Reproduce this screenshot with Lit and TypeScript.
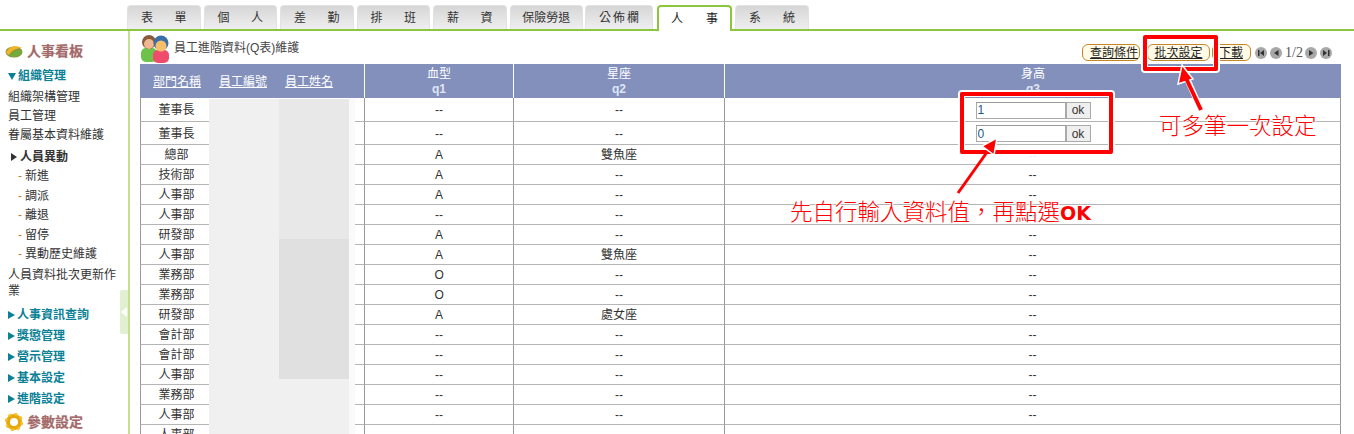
import { LitElement, html, css, svg } from "lit";
import { customElement } from "lit/decorators.js";

const TABS = ["表單", "個人", "差勤", "排班", "薪資", "保險勞退", "公佈欄", "人事", "系統"];
const ROWS: [string, string, string][] = [
  ["董事長", "--", "--"], ["董事長", "--", "--"], ["總部", "A", "雙魚座"], ["技術部", "A", "--"],
  ["人事部", "A", "--"], ["人事部", "--", "--"], ["研發部", "A", "--"], ["人事部", "A", "雙魚座"],
  ["業務部", "O", "--"], ["業務部", "O", "--"], ["研發部", "A", "處女座"], ["會計部", "--", "--"],
  ["會計部", "--", "--"], ["人事部", "--", "--"], ["業務部", "--", "--"], ["人事部", "--", "--"], ["人事部", "--", "--"],
];

const pager = (cx: number, d: string) => svg`
  <circle cx=${cx} cy="7" r="6" fill="#a8a8a8"></circle>
  <path d=${d} fill="#333"></path>`;

@customElement("app-root")
export class AppRoot extends LitElement {
  static styles = css`
    :host { display: block; position: relative; width: 1354px; height: 434px; overflow: hidden; background: #fff;
      font: 12px/16px "Liberation Sans", "Noto Sans CJK TC", sans-serif; color: #333; }
    .tabs { display: flex; height: 31px; box-sizing: border-box; border-bottom: 2px solid #8cc63f; padding: 5px 0 0 127px; gap: 3px; }
    .tab { box-sizing: border-box; width: 73.5px; height: 24px; display: flex; justify-content: space-between; align-items: center; padding: 0 13px;
      background: linear-gradient(#d6d6d6, #efefef); border: 1px solid #e2e2e2; border-bottom: 0; border-radius: 4px 4px 0 0; color: #333; }
    .tab.wide { width: 74px; } .tab.sm { width: 68px; margin-left: -1px; }
    .tab.mid { justify-content: center; padding: 0; }
    .tab.on { height: 26px; width: 75px; margin: 0 0 -2px 1px; background: #fff; border: 2px solid #8cc63f; border-bottom: 0; color: #222; padding: 0 12px; }
    .main { display: flex; height: 403px; }
    .side { box-sizing: border-box; width: 130px; flex: none; border-right: 2px solid #c4e093; padding-top: 10px; overflow: hidden; position: relative; }
    .brand { display: flex; align-items: center; gap: 4px; height: 20px; padding-left: 5px; font-size: 14px; font-weight: bold; color: #a56a6a; text-shadow: 0 0 1px #c9b0b0; }
    .brand + .sec { margin-top: 5px; }
    .sec { display: flex; align-items: center; gap: 1px; height: 21px; padding-left: 8px; color: #0a8196; font-weight: bold; }
    .sec.open { height: 20px; margin-bottom: 1.5px; }
    .tri { width: 0; height: 0; border-top: 4px solid transparent; border-bottom: 4px solid transparent; border-left: 7px solid #0a8196; margin-right: 1px; }
    .tri.down { border: 0; border-left: 4px solid transparent; border-right: 4px solid transparent; border-top: 7px solid #0a8196; margin-right: 1px; }
    .item { height: 19px; line-height: 19px; padding-left: 8px; color: #333; }
    .cur { display: flex; align-items: center; gap: 3px; height: 20px; margin-top: 2.5px; padding-left: 11px; font-weight: bold; color: #333; }
    .tri.dark { border-left: 6px solid #333; margin-right: 0; }
    .sub { height: 19.5px; line-height: 19.5px; padding-left: 18px; display: flex; gap: 3px; }
    .dash { color: #c77a2a; }
    .wrap { width: 112px; padding-left: 8px; margin: 2.5px 0 5px; line-height: 16px; }
    .brand.last { margin-top: 2.5px; }
    .handle { position: absolute; left: 120px; top: 259px; width: 8px; height: 44px; background: #e0f0d0; border-radius: 2px 0 0 2px; display: flex; align-items: center; }
    .handle i { width: 0; height: 0; border-top: 5px solid transparent; border-bottom: 5px solid transparent; border-right: 6px solid #fff; margin-left: 1px; }
    .content { flex: 1; min-width: 0; padding-left: 10px; }
    .head { display: flex; height: 33px; width: 1201px; }
    .title { display: flex; gap: 4px; align-items: center; color: #444; }
    .title svg { margin-top: 1px; }
    .tools { margin-left: auto; display: flex; align-items: center; margin-top: 13px; height: 17px; }
    .btn { box-sizing: border-box; height: 17px; line-height: 17px; text-align: center; border: 1px solid #c8862a; border-radius: 6px; background: #fffbe6; color: #222; text-decoration: underline; }
    .b1 { width: 58px; padding-left: 6px; } .b2 { width: 63px; margin-left: 7px; } .b3 { width: 39px; margin-left: 2px; text-align: right; padding-right: 7px; }
    .pager { display: flex; align-items: center; margin-left: 4px; margin-right: 8px; font: 14px "Liberation Serif", serif; color: #555; }
    .pager span { width: 22px; text-align: center; }
    table { border-collapse: separate; border-spacing: 0; table-layout: fixed; width: 1201px; }
    th { box-sizing: border-box; background: #8290bb; color: #fff; font-weight: normal; height: 34px; padding: 1px 0 0; border-right: 1px solid #fff; line-height: 15px; }
    th:last-child { border-right: 0; }
    th b { color: #dfe6f5; font-size: 12px; display: block; }
    .hcols { display: flex; gap: 18px; padding: 2px 0 0 13px; }
    .hcols u { color: #fff; }
    td { box-sizing: border-box; height: 20px; padding: 1px 0 0; text-align: center; border-bottom: 1px solid #b5b5b5; border-right: 1px solid #999; color: #333; line-height: 14px; white-space: nowrap; }
    td.first { border-left: 1px solid #999; border-right: 0; padding-left: 3px; }
    td.mask { border-right: 0; }
    tr.r0 td { height: 24px; } tr.r1 td { height: 23px; }
    .form { display: flex; justify-content: center; padding-left: 1px; }
    .form input { box-sizing: border-box; width: 90px; height: 17px; border: 1px solid #a9a9a9; border-top-color: #999; padding: 0 1px; font: 12px "Liberation Sans", sans-serif; color: #1a5a8a; outline: 0; }
    .form button { box-sizing: border-box; width: 25px; height: 17px; padding: 0; border: 1px solid #a9a9a9; background: #efefef; font: 12px "Liberation Sans", sans-serif; color: #333; }
    .blot { position: absolute; }
    .a { left: 209px; top: 99px; width: 70px; height: 335px; background: #f0f0f0; }
    .b { left: 279px; top: 99px; width: 70px; height: 140px; background: #e8e8e8; }
    .c { left: 279px; top: 239px; width: 70px; height: 140px; background: #e0e0e0; }
    .d { left: 279px; top: 379px; width: 70px; height: 55px; background: #f0f0f0; }
    .e { left: 349px; top: 99px; width: 6px; height: 335px; background: #fafafa; }
    .box { position: absolute; box-sizing: border-box; border: 4px solid #f00; border-radius: 2px; box-shadow: 0 0 0 2px #fff, inset 0 0 0 1px #fff; }
    .box1 { left: 960px; top: 92px; width: 153px; height: 62px; }
    .box2 { left: 1143px; top: 35px; width: 75px; height: 36px; }
    .arrows { position: absolute; left: 0; top: 0; }
    .note { position: absolute; color: #f00; font-family: "Liberation Serif", "Noto Sans CJK TC", serif; font-size: 22.5px; line-height: 28px; white-space: nowrap; font-weight: 300;
      text-shadow: 1px 0 0 #fff, -1px 0 0 #fff, 0 1px 0 #fff, 0 -1px 0 #fff; }
    .n1 { left: 1159px; top: 113px; }
    .n2 { left: 790px; top: 199px; }
    .n2 b { font: bold 19px/28px "DejaVu Sans", sans-serif; }
  `;

  render() {
    return html`
      <div class="tabs">
        ${TABS.map((t, i) => {
          const cls = "tab" + (i === 7 ? " on" : "") + (i === 6 ? " sm" : "") + (i === 8 ? " wide" : "");
          if (i === 5) return html`<div class="tab mid">${t}</div>`;
          return html`<div class=${cls}>${[...t].map((c) => html`<span>${c}</span>`)}</div>`;
        })}
      </div>
      <div class="main">
        <aside class="side">
          <div class="brand">
            <svg width="18" height="14" viewBox="0 0 18 14"><ellipse cx="9" cy="8" rx="8.5" ry="5.5" fill="#8a9a3a"></ellipse><path d="M1 9C3 3 10 0 17 4C12 4 7 6 4 11Z" fill="#f0b428"></path><path d="M5 12C8 7 12 6 17 7C15 11 10 14 5 12Z" fill="#6fae3a"></path></svg>
            人事看板
          </div>
          <div class="sec open"><i class="tri down"></i>組織管理</div>
          <div class="item">組織架構管理</div>
          <div class="item">員工管理</div>
          <div class="item">眷屬基本資料維護</div>
          <div class="cur"><i class="tri dark"></i>人員異動</div>
          ${["新進", "調派", "離退", "留停", "異動歷史維護"].map((s) => html`<div class="sub"><span class="dash">-</span>${s}</div>`)}
          <div class="wrap">人員資料批次更新作業</div>
          ${["人事資訊查詢", "獎懲管理", "營示管理", "基本設定", "進階設定"].map((s) => html`<div class="sec"><i class="tri"></i>${s}</div>`)}
          <div class="brand last">
            <svg width="18" height="18" viewBox="0 0 18 18"><circle cx="9" cy="9" r="6" fill="none" stroke="#e8a80c" stroke-width="4"></circle><circle cx="9" cy="9" r="8" fill="none" stroke="#f4c430" stroke-width="2.4" stroke-dasharray="3 3.3"></circle></svg>
            參數設定
          </div>
          <div class="handle"><i></i></div>
        </aside>
        <section class="content">
          <div class="head">
            <div class="title">
              <svg width="30" height="30" viewBox="0 0 30 30">
                <rect x="1" y="15" width="16" height="14" rx="5" fill="#6cc24a"></rect>
                <circle cx="9" cy="9" r="7" fill="#8a5a3a"></circle><circle cx="9" cy="11" r="5" fill="#f0b890"></circle>
                <rect x="13" y="17" width="16" height="13" rx="5" fill="#ef4b6c"></rect>
                <circle cx="21" cy="10" r="7.5" fill="#3a6ea8"></circle><circle cx="21" cy="13" r="5.5" fill="#f6c06a"></circle>
              </svg>
              <span>員工進階資料(Q表)維護</span>
            </div>
            <div class="tools">
              <div class="btn b1">查詢條件</div>
              <div class="btn b2">批次設定</div>
              <div class="btn b3">下載</div>
              <div class="pager">
                <svg width="28" height="14" viewBox="0 0 28 14">${pager(6, "M3 4h1.5v6H3zM9 4v6L5 7z")}${pager(21, "M23.5 4v6L19 7z")}</svg>
                <span>1/2</span>
                <svg width="28" height="14" viewBox="0 0 28 14">${pager(6, "M4 4v6l4.5-3z")}${pager(21, "M18 4v6l4-3zM23 4h1.5v6H23z")}</svg>
              </div>
            </div>
          </div>
          <table>
            <colgroup><col style="width:69px"><col style="width:70px"><col style="width:70px"><col style="width:16px"><col style="width:149px"><col style="width:211px"><col></colgroup>
            <thead><tr>
              <th colspan="4"><div class="hcols"><u>部門名稱</u><u>員工編號</u><u>員工姓名</u></div></th>
              <th>血型<b>q1</b></th><th>星座<b>q2</b></th><th>身高<b>q3</b></th>
            </tr></thead>
            <tbody>
              ${ROWS.map((r, i) => html`<tr class="r${i}">
                <td class="first">${r[0]}</td><td class="mask"></td><td class="mask"></td><td></td>
                <td>${r[1]}</td><td>${r[2]}</td>
                <td>${i < 2
                  ? html`<div class="form"><input .value=${i === 0 ? "1" : "0"} /><button>ok</button></div>`
                  : "--"}</td>
              </tr>`)}
            </tbody>
          </table>
        </section>
      </div>
      <div class="blot a"></div><div class="blot b"></div><div class="blot c"></div><div class="blot d"></div><div class="blot e"></div>
      <div class="box box1"></div>
      <div class="box box2"></div>
      <svg class="arrows" width="1354" height="434" viewBox="0 0 1354 434">
        <path d="M1201 110L1185 74" stroke="#fff" stroke-width="6" fill="none"></path>
        <path d="M1182 65L1193 79L1178 84Z" fill="#f00" stroke="#fff" stroke-width="1.5"></path>
        <path d="M1201 110L1185 76" stroke="#f00" stroke-width="4" fill="none"></path>
        <path d="M958 193L990 148" stroke="#f00" stroke-width="3" fill="none"></path>
        <path d="M997 138L994 155L982 146Z" fill="#f00" stroke="#fff" stroke-width="1.5"></path>
      </svg>
      <div class="note n1">可多筆一次設定</div>
      <div class="note n2">先自行輸入資料值，再點選<b>OK</b></div>
    `;
  }
}
